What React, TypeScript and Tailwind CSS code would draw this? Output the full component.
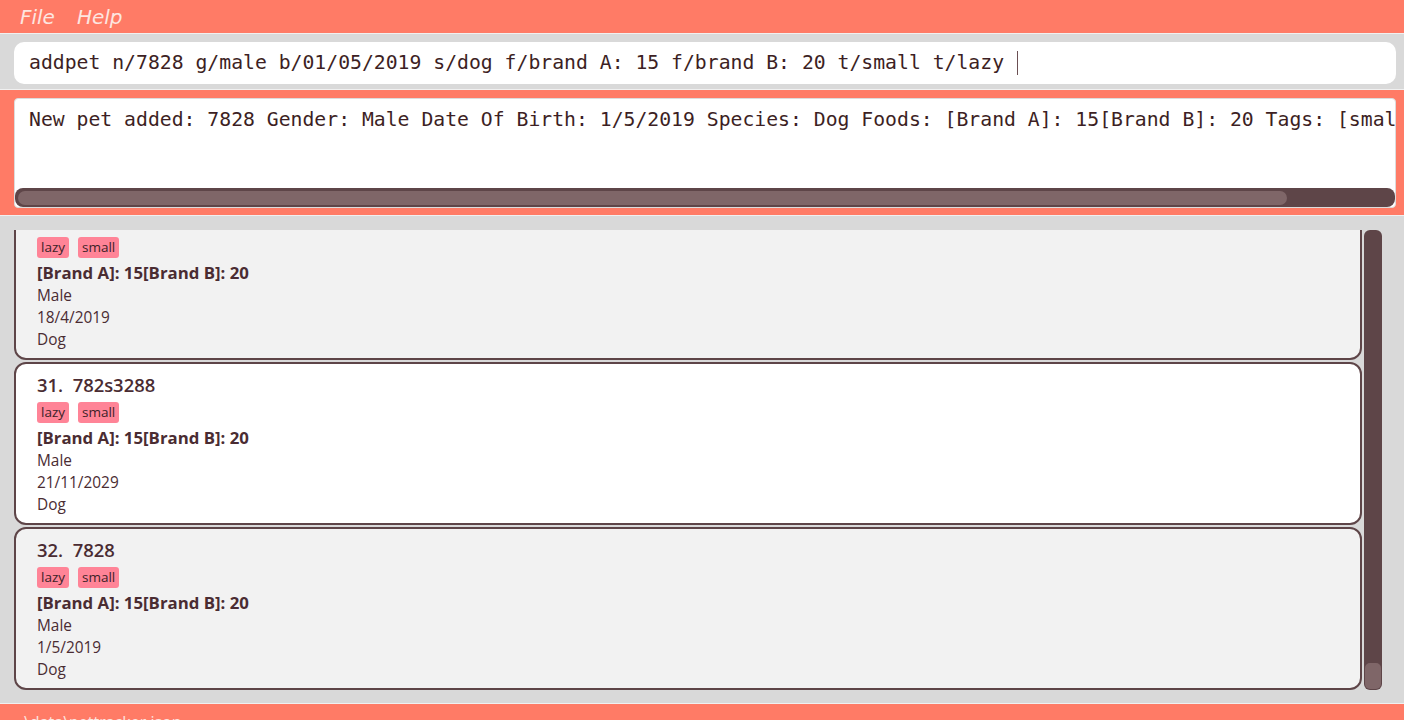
import React from "react";

type Pet = {
  index?: number;
  name?: string;
  tags: string[];
  foods: string;
  gender: string;
  dob: string;
  species: string;
  selected?: boolean;
};

const pets: Pet[] = [
  { index: 30, name: "7828s", tags: ["lazy", "small"], foods: "[Brand A]: 15[Brand B]: 20", gender: "Male", dob: "18/4/2019", species: "Dog" },
  { index: 31, name: "782s3288", tags: ["lazy", "small"], foods: "[Brand A]: 15[Brand B]: 20", gender: "Male", dob: "21/11/2029", species: "Dog", selected: true },
  { index: 32, name: "7828", tags: ["lazy", "small"], foods: "[Brand A]: 15[Brand B]: 20", gender: "Male", dob: "1/5/2019", species: "Dog" },
];

const mono = "font-['DejaVu_Sans_Mono',monospace]";
const sans = "font-['Open_Sans','Noto_Sans',sans-serif]";

function PetCard({ pet }: { pet: Pet }) {
  return (
    <div
      className={`shrink-0 h-[163px] rounded-[12px] border-2 border-[#5e4548] px-[21px] pt-[8px] pb-[6px] text-[#4a2c32] ${sans} ${
        pet.selected ? "bg-white" : "bg-[#f2f2f2]"
      }`}
    >
      <div className="h-[26px] text-[18.4px] font-semibold leading-[26px] whitespace-pre">
        {pet.index}.  {pet.name}
      </div>
      <div className="mt-[4px] flex gap-[9px]">
        {pet.tags.map((t) => (
          <span key={t} className="h-[21px] rounded-[3px] bg-[#ff8497] px-[4px] text-[13.5px] leading-[21px] text-[#3d2228]">
            {t}
          </span>
        ))}
      </div>
      <div className="mt-[3px] text-[16.8px] font-bold leading-[24px]">{pet.foods}</div>
      <div className="text-[15.4px] leading-[22px]">{pet.gender}</div>
      <div className="text-[15.4px] leading-[22px]">{pet.dob}</div>
      <div className="text-[15.4px] leading-[22px]">{pet.species}</div>
    </div>
  );
}

export default function App() {
  return (
    <div className="flex h-[720px] w-[1404px] flex-col overflow-hidden bg-[#d9d9d9]">
      {/* Menu bar */}
      <div className="flex h-[33px] shrink-0 items-center gap-[22px] bg-[#ff7b66] px-[20px] font-['DejaVu_Sans',sans-serif] text-[20px] font-extralight italic text-[#fde6e0]">
        <span>File</span>
        <span>Help</span>
      </div>

      {/* Command box */}
      <div className="shrink-0 border-t border-[#f0f0f0] pl-[14px] pr-[8px] pt-[8px] pb-[5px]">
        <div className={`flex h-[42px] items-center rounded-[10px] bg-white px-[15px] text-[19.75px] text-[#3d1f24] ${mono}`}>
          <span className="whitespace-pre">addpet n/7828 g/male b/01/05/2019 s/dog f/brand A: 15 f/brand B: 20 t/small t/lazy </span>
          <span className="ml-[1px] h-[24px] w-[1px] bg-[#6b4f53]" />
        </div>
      </div>

      {/* Result box */}
      <div className="shrink-0 border-t border-[#f0f0f0] bg-[#ff7b66] pl-[14px] pr-[8px] pt-[8px] pb-[7px]">
        <div className="flex h-[110px] flex-col overflow-hidden rounded-[4px] border border-[#dcdcdc] bg-white">
          <div className={`flex-1 overflow-hidden whitespace-pre px-[14px] pt-[6px] text-[19.75px] text-[#3d1f24] ${mono}`}>
            New pet added: 7828 Gender: Male Date Of Birth: 1/5/2019 Species: Dog Foods: [Brand A]: 15[Brand B]: 20 Tags: [small][lazy]
          </div>
          <div className="flex h-[19px] items-center rounded-[8px] bg-[#5e4548] px-[3px]">
            <div className="h-[14px] w-[1269px] rounded-[7px] bg-[#7f6668]" />
          </div>
        </div>
      </div>

      {/* Pet list */}
      <div className="flex h-[488px] shrink-0 gap-[2px] border-t border-[#f0f0f0] pl-[14px] pr-[22px] pt-[14px] pb-[13px]">
        <div className="flex min-h-0 flex-1 flex-col justify-end gap-[2px] overflow-hidden">
          {pets.map((p) => (
            <PetCard key={p.index} pet={p} />
          ))}
        </div>
        <div className="flex w-[18px] flex-col justify-end rounded-[6px] bg-[#5e4548] p-[1px]">
          <div className="h-[26px] rounded-[5px] bg-[#7f6668]" />
        </div>
      </div>

      {/* Status bar */}
      <div className={`h-[30px] shrink-0 border-t border-[#f0f0f0] bg-[#ff7b66] px-[24px] pt-[6px] text-[16px] text-[#fde6e0] ${sans}`}>
        \data\pettracker.json
      </div>
    </div>
  );
}
